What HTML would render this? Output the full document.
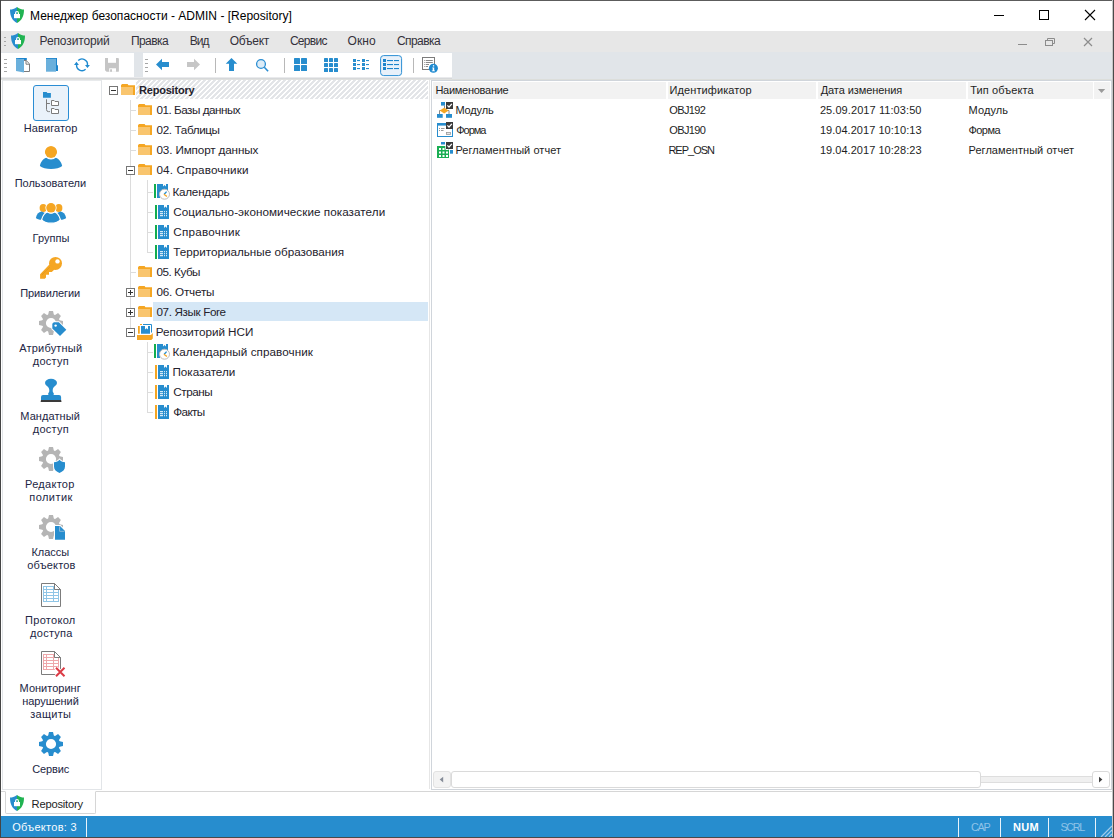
<!DOCTYPE html>
<html lang="ru">
<head>
<meta charset="utf-8">
<title>Менеджер безопасности - ADMIN - [Repository]</title>
<style>
html,body{margin:0;padding:0;}
body{width:1114px;height:838px;overflow:hidden;background:#fff;font-family:"Liberation Sans","DejaVu Sans",sans-serif;font-size:12px;color:#1e1e1e;}
#win{position:relative;width:1114px;height:838px;overflow:hidden;background:#fff;}
.a{position:absolute;}
.t{position:absolute;white-space:nowrap;line-height:16px;height:16px;}
#title{left:1px;top:1px;width:1112px;height:30px;background:#fff;}
#menu{left:1px;top:31px;width:1112px;height:21px;background:#e7e7e7;}
#tbrow{left:1px;top:52px;width:1112px;height:28px;background:#e1e5e9;}
#tbline{left:1px;top:77px;width:451px;height:3px;background:linear-gradient(#e9eaec 0,#e9eaec 33.3%,#d6d8da 33.3%,#d6d8da 66.6%,#dfe0de 66.6%,#dfe0de 100%);}
#tbline2{left:452px;top:79px;width:661px;height:1px;background:#dcdedb;}
#tb1{left:1px;top:53px;width:133px;height:24px;background:#fff;}
#tb2{left:143px;top:53px;width:309px;height:24px;background:#fff;}
#side{left:2px;top:80px;width:98px;height:708px;background:#fff;border:1px solid #e2e5e8;border-top-color:#e8eaec;box-sizing:content-box;}
#navbtn{left:33px;top:85px;width:34px;height:34px;border:1px solid #2a8dd4;border-radius:3px;background:#eaf2fa;}
#tree{left:103px;top:80px;width:325px;height:711px;background:#fff;}
#sel{left:153px;top:302px;width:275px;height:19px;background:#d5e7f6;}
#split{left:429px;top:80px;width:1px;height:709px;background:#e6e6e6;}
#list{left:431px;top:80px;width:681px;height:710px;background:#fff;border:1px solid #d0d5db;box-sizing:border-box;}
.hd{top:82px;height:17px;background:#f2f2f2;}
#sbtrack{left:452px;top:776px;width:641px;height:7px;background:#f0f0f0;border:1px solid #dedede;box-sizing:border-box;}
#sbthumb{left:451px;top:771px;width:530px;height:17px;background:#fff;border:1px solid #dadada;border-radius:3px;box-sizing:border-box;}
.sbb{top:771px;width:18px;height:17px;background:#fff;border:1px solid #dadada;border-radius:3px;box-sizing:border-box;}
#tabline{left:1px;top:791px;width:1112px;height:1px;background:#d6d6d6;}
#tab{left:5px;top:791px;width:89px;height:21px;background:#fff;border:1px solid #d6d6d6;border-top:1px solid #fff;border-radius:0 0 2px 2px;box-sizing:content-box;}
#status{left:1px;top:816px;width:1112px;height:21px;background:#278dce;}
.ss{top:818px;width:1px;height:19px;background:#e9f3fb;}
#bT{left:0;top:0;width:1114px;height:1px;background:#5c5c5c;}
#bL{left:0;top:0;width:1px;height:838px;background:#454545;}
#bR{left:1112px;top:0;width:2px;height:838px;background:linear-gradient(90deg,#c6c6c6 0,#c6c6c6 50%,#4a4a4a 50%,#4a4a4a 100%);}
#bB{left:0;top:837px;width:1114px;height:1px;background:#4a4a4a;}
</style>
</head>
<body>
<div id="win">
<div id="title" class="a"></div>
<div id="menu" class="a"></div>
<div id="tbrow" class="a"></div>
<div id="tbline" class="a"></div><div id="tbline2" class="a"></div>
<div id="tb1" class="a"></div>
<div id="tb2" class="a"></div>
<div id="tree" class="a"></div>
<div id="sel" class="a"></div>
<div id="split" class="a"></div>
<div id="list" class="a"></div>
<div class="a hd" style="left:433px;width:233px"></div>
<div class="a hd" style="left:668px;width:148px"></div>
<div class="a hd" style="left:818px;width:148px"></div>
<div class="a hd" style="left:968px;width:125px"></div>
<div class="a hd" style="left:1094px;width:16px"></div>
<div id="sbtrack" class="a"></div>
<div id="sbthumb" class="a"></div>
<div class="a sbb" style="left:433px;background:#f3f3f3;border-color:#e2e2e2"></div>
<div class="a sbb" style="left:1092px"></div>
<div id="side" class="a"></div>
<div id="navbtn" class="a"></div>
<div id="tabline" class="a"></div>
<div id="tab" class="a"></div>
<div id="status" class="a"></div>
<div class="a ss" style="left:86px"></div>
<div class="a ss" style="left:958px"></div>
<div class="a ss" style="left:1000px"></div>
<div class="a ss" style="left:1048px"></div>
<div class="a ss" style="left:1095px"></div>
<svg class="a" style="left:0;top:0" width="1114" height="838" viewBox="0 0 1114 838">
<defs><pattern id="hx" x="0" y="0" width="5" height="5" patternUnits="userSpaceOnUse"><g fill="#e3e5e8" shape-rendering="crispEdges"><rect x="3" y="0" width="1" height="1"/><rect x="4" y="0" width="1" height="1"/><rect x="0" y="0" width="1" height="1"/><rect x="2" y="1" width="1" height="1"/><rect x="3" y="1" width="1" height="1"/><rect x="4" y="1" width="1" height="1"/><rect x="1" y="2" width="1" height="1"/><rect x="2" y="2" width="1" height="1"/><rect x="3" y="2" width="1" height="1"/><rect x="0" y="3" width="1" height="1"/><rect x="1" y="3" width="1" height="1"/><rect x="2" y="3" width="1" height="1"/><rect x="4" y="4" width="1" height="1"/><rect x="0" y="4" width="1" height="1"/><rect x="1" y="4" width="1" height="1"/></g></pattern></defs>
<rect x="136" y="80" width="292" height="19" fill="url(#hx)" shape-rendering="crispEdges"/>
<path d="M17,7 C14.5,8.8 12,9.6 10,9.6 C10,16.5 12.2,20.5 17,23 Z" fill="#278dce"/><path d="M17,7 C19.5,8.8 22,9.6 24,9.6 C24,16.5 21.8,20.5 17,23 Z" fill="#21b352"/><rect x="14" y="14" width="6" height="4.2" fill="#fff"/><path d="M15.6,14.2 v-1.3 a1.4,1.4 0 0 1 2.8,0 v1.3" fill="none" stroke="#fff" stroke-width="1.2"/>
<path d="M18,33 C15.5,34.8 13,35.6 11,35.6 C11,42.5 13.2,46.5 18,49 Z" fill="#278dce"/><path d="M18,33 C20.5,34.8 23,35.6 25,35.6 C25,42.5 22.8,46.5 18,49 Z" fill="#21b352"/><rect x="15" y="40" width="6" height="4.2" fill="#fff"/><path d="M16.6,40.2 v-1.3 a1.4,1.4 0 0 1 2.8,0 v1.3" fill="none" stroke="#fff" stroke-width="1.2"/>
<path d="M17,795 C14.5,796.8 12,797.6 10,797.6 C10,804.5 12.2,808.5 17,811 Z" fill="#278dce"/><path d="M17,795 C19.5,796.8 22,797.6 24,797.6 C24,804.5 21.8,808.5 17,811 Z" fill="#21b352"/><rect x="14" y="802" width="6" height="4.2" fill="#fff"/><path d="M15.6,802.2 v-1.3 a1.4,1.4 0 0 1 2.8,0 v1.3" fill="none" stroke="#fff" stroke-width="1.2"/>
<g stroke="#000" stroke-width="1" fill="none"><path d="M994,15.5 h10"/><rect x="1039.5" y="10.5" width="9" height="9"/><path d="M1085,10 l10,10 M1095,10 l-10,10" stroke-width="1.1"/></g>
<g stroke="#8c8c8c" stroke-width="1" fill="none"><path d="M1018,44.5 h9"/><path d="M1047.5,40.5 v-2 h7 v5 h-2"/><rect x="1045.5" y="40.5" width="7" height="5" fill="#e7e7e7"/><path d="M1084,38 l8,8 M1092,38 l-8,8" stroke-width="1.2"/></g>
<g fill="#a6a6a6"><rect x="4" y="59" width="3" height="1"/><rect x="145" y="59" width="3" height="1"/><rect x="4" y="63" width="3" height="1"/><rect x="145" y="63" width="3" height="1"/><rect x="4" y="67" width="3" height="1"/><rect x="145" y="67" width="3" height="1"/><rect x="4" y="71" width="3" height="1"/><rect x="145" y="71" width="3" height="1"/><rect x="4" y="37" width="2" height="1"/><rect x="4" y="41" width="2" height="1"/><rect x="4" y="45" width="2" height="1"/></g>
<path d="M16,58 h10.8 v2.2 h-2.8 v-0.6 h-8 Z" fill="#1c84cc"/>
<path d="M23,60.5 H26.200 L29.5,63.800 V71.5 H23 Z" fill="#fff" stroke="#7c7c7c" stroke-width="1"/>
<path d="M26,60.800 V64.200 H29.3" fill="none" stroke="#7c7c7c" stroke-width="1"/>
<path d="M16,58.6 l8,1 v13 l-8,-1.7 Z" fill="#6ab0dc"/>
<path d="M46,58 h11 v7.2 h1 v5.7 h-2.2 v-12 h-9.8 Z" fill="#1c84cc"/>
<rect x="46" y="58.8" width="10" height="12.9" fill="#6ab0dc"/>
<g fill="none" stroke="#1f8ad0" stroke-width="1.4"><path d="M78.2,60.6 A5.4,5.4 0 0 1 87.4,65.2"/><path d="M85.6,69.3 A5.4,5.4 0 0 1 76.6,64.8"/></g>
<path d="M74,64.9 h4.9 l-2.45,-3.2 Z M85,65.1 h4.9 l-2.45,3 Z" fill="#1f8ad0"/>
<path d="M105,58 h13 q0.9,0 0.9,0.9 v12 q0,0.9 -0.9,0.9 h-11.4 l-1.6,-1.6 Z" fill="#c5c5c5"/>
<rect x="108" y="58" width="8" height="4.8" fill="#fff"/><rect x="109.2" y="68.3" width="6.8" height="3.5" fill="#fff"/><rect x="110.1" y="69.3" width="1.9" height="2.5" fill="#c5c5c5"/>
<path d="M156,64.5 l6,-5.7 v3.2 h7 v5 h-7 v3.2 Z" fill="#278dce"/>
<path d="M200,64.5 l-6,-5.7 v3.2 h-7 v5 h7 v3.2 Z" fill="#c6c6c6"/>
<rect x="215" y="58" width="1" height="15" fill="#b8b8b8"/><rect x="284" y="58" width="1" height="15" fill="#b8b8b8"/><rect x="413" y="58" width="1" height="15" fill="#b8b8b8"/>
<path d="M231.5,57.9 l5.8,5.9 h-3.3 v7.1 h-5 v-7.1 h-3.3 Z" fill="#278dce"/>
<circle cx="261" cy="64" r="4.4" fill="#ddecf7" stroke="#2a8dd2" stroke-width="1.3"/><path d="M264.3,67.3 l3.8,3.9" stroke="#2a8dd2" stroke-width="1.6"/>
<g fill="#278dce"><rect x="294" y="58" width="6" height="6" rx=".6"/><rect x="301" y="58" width="6" height="6" rx=".6"/><rect x="294" y="65" width="6" height="6" rx=".6"/><rect x="301" y="65" width="6" height="6" rx=".6"/><rect x="324" y="58" width="4" height="4" rx=".6"/><rect x="324" y="63" width="4" height="4" rx=".6"/><rect x="324" y="68" width="4" height="4" rx=".6"/><rect x="329" y="58" width="4" height="4" rx=".6"/><rect x="329" y="63" width="4" height="4" rx=".6"/><rect x="329" y="68" width="4" height="4" rx=".6"/><rect x="334" y="58" width="4" height="4" rx=".6"/><rect x="334" y="63" width="4" height="4" rx=".6"/><rect x="334" y="68" width="4" height="4" rx=".6"/><rect x="353" y="59" width="3" height="3"/><rect x="357" y="60" width="3" height="1.1"/><rect x="362" y="59" width="3" height="3"/><rect x="366" y="60" width="3" height="1.1"/><rect x="353" y="63" width="3" height="3"/><rect x="357" y="64" width="3" height="1.1"/><rect x="362" y="63" width="3" height="3"/><rect x="366" y="64" width="3" height="1.1"/><rect x="353" y="67" width="3" height="3"/><rect x="357" y="68" width="3" height="1.1"/><rect x="362" y="67" width="3" height="3"/><rect x="366" y="68" width="3" height="1.1"/></g>
<rect x="380.6" y="55.6" width="21" height="20" rx="3" fill="#e8f1fa" stroke="#2d8fd4" stroke-width="1"/>
<g fill="#1c84cc"><rect x="383" y="59" width="3" height="3"/><rect x="387" y="60" width="6" height="1.1"/><rect x="394" y="60" width="5" height="1.1"/><rect x="383" y="63" width="3" height="3"/><rect x="387" y="64" width="6" height="1.1"/><rect x="394" y="64" width="5" height="1.1"/><rect x="383" y="67" width="3" height="3"/><rect x="387" y="68" width="6" height="1.1"/><rect x="394" y="68" width="5" height="1.1"/></g>
<rect x="422.5" y="57.5" width="12" height="12" fill="#fff" stroke="#7c7c7c" stroke-width="1"/>
<g fill="#8a8a8a"><rect x="424.3" y="60" width="1" height="1"/><rect x="424.3" y="62" width="1" height="1"/><rect x="424.3" y="64" width="1" height="1"/><rect x="424.3" y="66" width="1" height="1"/><rect x="426" y="60" width="6.8" height="1"/><rect x="426" y="62" width="6.8" height="1"/><rect x="426" y="64" width="3" height="1"/><rect x="426" y="66" width="2" height="1"/></g>
<circle cx="433.4" cy="68.3" r="4.5" fill="#1f8ad0"/><rect x="432.9" y="65.2" width="1.3" height="1.3" fill="#fff"/><path d="M432.3,67.4 h1.9 v3 h0.8 v0.9 h-3.2 v-0.9 h0.9 v-2.1 h-0.4 Z" fill="#fff"/>
<path d="M43,92 h3.6 l0.8,1 h3.5 v4.8 h-7.9 Z" fill="#278dce"/>
<path d="M46.5,99.3 v10.3 q0,2 2,2 h1.4 M46.5,103.5 h3.4" fill="none" stroke="#7c7c7c" stroke-width="1"/>
<path d="M51.5,100.5 h2.6 l0.9,1 h3.5 v4 h-7 Z" fill="#fff" stroke="#7c7c7c" stroke-width="1"/>
<path d="M51.5,108.5 h2.6 l0.9,1 h3.5 v4 h-7 Z" fill="#fff" stroke="#7c7c7c" stroke-width="1"/>
<path d="M39.9,166 C41,161 44,158 47.5,157.6 Q51,160.2 54.5,157.6 C58,158 61,161 62.2,166 C58,170 44,170 39.9,166 Z" fill="#278dce"/>
<circle cx="51" cy="152" r="6.1" fill="#f5a623" stroke="#fff" stroke-width="0"/>
<circle cx="51" cy="152" r="6.9" fill="none" stroke="#fff" stroke-width="1.2"/>
<ellipse cx="43.2" cy="208" rx="3.6" ry="4.1" fill="#f5a623"/><ellipse cx="58.8" cy="208" rx="3.6" ry="4.1" fill="#f5a623"/>
<path d="M35.9,218 C36.5,214.5 38.5,212 41.5,211.6 L45,213 L41.5,219.8 C39,219.8 37,219 35.9,218 Z" fill="#278dce"/>
<path d="M66.1,218 C65.5,214.5 63.500,212 60.5,211.6 L57,213 L60.5,219.8 C63,219.8 65,219 66.100,218 Z" fill="#278dce"/>
<path d="M41.600,219.600 C42.800,215.400 44.900,212.600 47.700,212 Q51,214.200 54.300,212 C57.100,212.600 59.200,215.400 60.400,219.600 C57,224.400 45,224.400 41.600,219.600 Z" fill="#278dce" stroke="#fff" stroke-width="1.2"/>
<circle cx="51" cy="207.8" r="5.6" fill="#fff"/><circle cx="51" cy="207.8" r="4.8" fill="#f5a623"/>
<circle cx="55.5" cy="263.4" r="6.5" fill="#f5a623"/><path d="M49.4,264.6 L40.1,274.3 V278.8 H44.8 L46,277.6 V274.7 H49 V271.9 H51.8 L55,269 Z" fill="#f5a623"/><circle cx="57.5" cy="261.4" r="2.2" fill="#fff"/><path d="M42.2,274.6 L49.6,267.4" stroke="#c98a1e" stroke-width=".7" stroke-dasharray="1 .6" fill="none"/>
<g fill="#b5b5b5"><path d="M49.0,311 h4.0 L54.0,315.3 h-6.0 Z" transform="rotate(0 51 323)"/><path d="M49.0,311 h4.0 L54.0,315.3 h-6.0 Z" transform="rotate(45 51 323)"/><path d="M49.0,311 h4.0 L54.0,315.3 h-6.0 Z" transform="rotate(90 51 323)"/><path d="M49.0,311 h4.0 L54.0,315.3 h-6.0 Z" transform="rotate(135 51 323)"/><path d="M49.0,311 h4.0 L54.0,315.3 h-6.0 Z" transform="rotate(180 51 323)"/><path d="M49.0,311 h4.0 L54.0,315.3 h-6.0 Z" transform="rotate(225 51 323)"/><path d="M49.0,311 h4.0 L54.0,315.3 h-6.0 Z" transform="rotate(270 51 323)"/><path d="M49.0,311 h4.0 L54.0,315.3 h-6.0 Z" transform="rotate(315 51 323)"/></g><circle cx="51" cy="323" r="7.0" fill="none" stroke="#b5b5b5" stroke-width="3.8000000000000007"/>
<path d="M52.3,323.8 L53.8,322.2 L58.8,322.2 L66.3,329.8 L60,336 L52.3,328.6 Z" fill="#fff" stroke="#fff" stroke-width="2"/><path d="M52.3,323.8 L53.8,322.2 L58.8,322.2 L66.3,329.8 L60,336 L52.3,328.6 Z" fill="#278dce"/><circle cx="55.6" cy="325.600" r="1.2" fill="#fff"/>
<ellipse cx="51" cy="382.9" rx="6" ry="4.2" fill="#278dce"/><path d="M46.500,385 C47.5,386.800 49.3,387.500 49.3,390 C49.3,391.500 49.2,392.200 48.600,392.700 Q47.900,393.200 48.200,394.200 L48.500,395 H43 Q41,395 41,397 V400 H61.100 V397 Q61.100,395 59,395 H53.500 L53.800,394.200 Q54.100,393.200 53.400,392.700 C52.800,392.200 52.700,391.500 52.700,390 C52.700,387.500 54.5,386.800 55.5,385 Z" fill="#278dce"/><path d="M41,400 h20.100 l0.400,2 h-20.900 Z" fill="#3a3a3a"/>
<g fill="#b5b5b5"><path d="M49.0,447 h4.0 L54.0,451.3 h-6.0 Z" transform="rotate(0 51 459)"/><path d="M49.0,447 h4.0 L54.0,451.3 h-6.0 Z" transform="rotate(45 51 459)"/><path d="M49.0,447 h4.0 L54.0,451.3 h-6.0 Z" transform="rotate(90 51 459)"/><path d="M49.0,447 h4.0 L54.0,451.3 h-6.0 Z" transform="rotate(135 51 459)"/><path d="M49.0,447 h4.0 L54.0,451.3 h-6.0 Z" transform="rotate(180 51 459)"/><path d="M49.0,447 h4.0 L54.0,451.3 h-6.0 Z" transform="rotate(225 51 459)"/><path d="M49.0,447 h4.0 L54.0,451.3 h-6.0 Z" transform="rotate(270 51 459)"/><path d="M49.0,447 h4.0 L54.0,451.3 h-6.0 Z" transform="rotate(315 51 459)"/></g><circle cx="51" cy="459" r="7.0" fill="none" stroke="#b5b5b5" stroke-width="3.8000000000000007"/>
<path d="M54,462.3 C56.5,462.3 58.3,461.3 59.5,459.8 C60.700,461.3 62.5,462.3 65,462.3 V466.5 C65,469.8 62.800,471.600 59.5,472.900 C56.200,471.600 54,469.8 54,466.5 Z" fill="#fff" stroke="#fff" stroke-width="2"/><path d="M54,462.3 C56.5,462.3 58.3,461.3 59.5,459.8 C60.700,461.3 62.5,462.3 65,462.3 V466.5 C65,469.8 62.800,471.600 59.5,472.900 C56.200,471.600 54,469.8 54,466.5 Z" fill="#278dce"/>
<g fill="#b5b5b5"><path d="M49.0,515 h4.0 L54.0,519.3000000000001 h-6.0 Z" transform="rotate(0 51 527)"/><path d="M49.0,515 h4.0 L54.0,519.3000000000001 h-6.0 Z" transform="rotate(45 51 527)"/><path d="M49.0,515 h4.0 L54.0,519.3000000000001 h-6.0 Z" transform="rotate(90 51 527)"/><path d="M49.0,515 h4.0 L54.0,519.3000000000001 h-6.0 Z" transform="rotate(135 51 527)"/><path d="M49.0,515 h4.0 L54.0,519.3000000000001 h-6.0 Z" transform="rotate(180 51 527)"/><path d="M49.0,515 h4.0 L54.0,519.3000000000001 h-6.0 Z" transform="rotate(225 51 527)"/><path d="M49.0,515 h4.0 L54.0,519.3000000000001 h-6.0 Z" transform="rotate(270 51 527)"/><path d="M49.0,515 h4.0 L54.0,519.3000000000001 h-6.0 Z" transform="rotate(315 51 527)"/></g><circle cx="51" cy="527" r="7.0" fill="none" stroke="#b5b5b5" stroke-width="3.8000000000000007"/>
<path d="M55,526 h5 l5,5 v8.800 h-10 Z" fill="#fff" stroke="#fff" stroke-width="2"/><path d="M55,526 h5 l5,5 v8.800 h-10 Z" fill="#278dce"/><path d="M59.600,526.300 v5 h5" fill="none" stroke="#9fc3dd" stroke-width=".8"/>
<path d="M41.5,583.5 h13 l6,6 v17 h-19 Z" fill="#fff" stroke="#7c7c7c"/><path d="M54.5,583.5 v6 h6" fill="#fff" stroke="#7c7c7c"/><path d="M43,586.5 H54 M43,589.5 H58.5 M43,592.5 H58.5 M43,595.5 H58.5 M43,598.5 H58.5 M43,601.5 H58.5 M43.5,586 V602 M46.5,586 V602 M53.5,586 V602 M58.5,589.5 V602 " stroke="#8fc5e6" stroke-width="1" fill="none"/><path d="M54.5,583.5 v6 h6 Z" fill="#fff" stroke="#7c7c7c"/>
<path d="M41.5,651.5 h13 l6,6 v17 h-19 Z" fill="#fff" stroke="#7c7c7c"/><path d="M54.5,651.5 v6 h6" fill="#fff" stroke="#7c7c7c"/><path d="M43,654.5 H54 M43,657.5 H58.5 M43,660.5 H58.5 M43,663.5 H58.5 M43,666.5 H58.5 M43,669.5 H58.5 M43.5,654 V670 M46.5,654 V670 M53.5,654 V670 M58.5,657.5 V670 " stroke="#eea7aa" stroke-width="1" fill="none"/><path d="M54.5,651.5 v6 h6 Z" fill="#fff" stroke="#7c7c7c"/>
<path d="M56,667.800 l8.500,8.500 M64.5,667.800 l-8.500,8.500" stroke="#fff" stroke-width="4"/><path d="M56,667.800 l8.500,8.500 M64.5,667.800 l-8.500,8.500" stroke="#dc3c46" stroke-width="2"/>
<g fill="#278dce"><path d="M49.0,732 h4.0 L54.0,736.3000000000001 h-6.0 Z" transform="rotate(0 51 744)"/><path d="M49.0,732 h4.0 L54.0,736.3000000000001 h-6.0 Z" transform="rotate(45 51 744)"/><path d="M49.0,732 h4.0 L54.0,736.3000000000001 h-6.0 Z" transform="rotate(90 51 744)"/><path d="M49.0,732 h4.0 L54.0,736.3000000000001 h-6.0 Z" transform="rotate(135 51 744)"/><path d="M49.0,732 h4.0 L54.0,736.3000000000001 h-6.0 Z" transform="rotate(180 51 744)"/><path d="M49.0,732 h4.0 L54.0,736.3000000000001 h-6.0 Z" transform="rotate(225 51 744)"/><path d="M49.0,732 h4.0 L54.0,736.3000000000001 h-6.0 Z" transform="rotate(270 51 744)"/><path d="M49.0,732 h4.0 L54.0,736.3000000000001 h-6.0 Z" transform="rotate(315 51 744)"/></g><circle cx="51" cy="744" r="7.0" fill="none" stroke="#278dce" stroke-width="3.8000000000000007"/>
<g fill="#dcdcdc"><rect x="130" y="100" width="1" height="228"/><rect x="147" y="180" width="1" height="73"/><rect x="147" y="342" width="1" height="71"/>
<rect x="131" y="110" width="5" height="1"/>
<rect x="131" y="130" width="5" height="1"/>
<rect x="131" y="150" width="5" height="1"/>
<rect x="131" y="272" width="5" height="1"/>
<rect x="148" y="192" width="5" height="1"/>
<rect x="148" y="212" width="5" height="1"/>
<rect x="148" y="232" width="5" height="1"/>
<rect x="148" y="252" width="5" height="1"/>
<rect x="148" y="352" width="5" height="1"/>
<rect x="148" y="372" width="5" height="1"/>
<rect x="148" y="392" width="5" height="1"/>
<rect x="148" y="412" width="5" height="1"/>
</g>
<rect x="109.5" y="86.5" width="8" height="8" fill="#fff" stroke="#767676"/><rect x="111" y="90" width="5" height="1" fill="#333"/>
<rect x="126.5" y="166.5" width="8" height="8" fill="#fff" stroke="#767676"/><rect x="128" y="170" width="5" height="1" fill="#333"/>
<rect x="126.5" y="288.5" width="8" height="8" fill="#fff" stroke="#767676"/><rect x="128" y="292" width="5" height="1" fill="#333"/><rect x="130" y="290" width="1" height="5" fill="#333"/>
<rect x="126.5" y="308.5" width="8" height="8" fill="#fff" stroke="#767676"/><rect x="128" y="312" width="5" height="1" fill="#333"/><rect x="130" y="310" width="1" height="5" fill="#333"/>
<rect x="126.5" y="328.5" width="8" height="8" fill="#fff" stroke="#767676"/><rect x="128" y="332" width="5" height="1" fill="#333"/>
<path d="M122,84 h5.6 l0.9,1.3 h6.5 v9.7 h-2 v-7.9 h-12 v-1.8 Z" fill="#f5a623"/><rect x="121" y="87" width="12" height="8" fill="#f9c56e"/>
<path d="M139,104 h5.6 l0.9,1.3 h6.5 v9.7 h-2 v-7.9 h-12 v-1.8 Z" fill="#f5a623"/><rect x="138" y="107" width="12" height="8" fill="#f9c56e"/>
<path d="M139,124 h5.6 l0.9,1.3 h6.5 v9.7 h-2 v-7.9 h-12 v-1.8 Z" fill="#f5a623"/><rect x="138" y="127" width="12" height="8" fill="#f9c56e"/>
<path d="M139,144 h5.6 l0.9,1.3 h6.5 v9.7 h-2 v-7.9 h-12 v-1.8 Z" fill="#f5a623"/><rect x="138" y="147" width="12" height="8" fill="#f9c56e"/>
<path d="M139,164 h5.6 l0.9,1.3 h6.5 v9.7 h-2 v-7.9 h-12 v-1.8 Z" fill="#f5a623"/><rect x="138" y="167" width="12" height="8" fill="#f9c56e"/>
<path d="M139,266 h5.6 l0.9,1.3 h6.5 v9.7 h-2 v-7.9 h-12 v-1.8 Z" fill="#f5a623"/><rect x="138" y="269" width="12" height="8" fill="#f9c56e"/>
<path d="M139,286 h5.6 l0.9,1.3 h6.5 v9.7 h-2 v-7.9 h-12 v-1.8 Z" fill="#f5a623"/><rect x="138" y="289" width="12" height="8" fill="#f9c56e"/>
<path d="M139,306 h5.6 l0.9,1.3 h6.5 v9.7 h-2 v-7.9 h-12 v-1.8 Z" fill="#f5a623"/><rect x="138" y="309" width="12" height="8" fill="#f9c56e"/>
<rect x="154" y="184" width="2" height="14" fill="#12ad4f"/><path d="M157,184 h6 v2.6 l1.5,-1.5 l1.5,1.5 v-2.6 h2 v9 h-8 v5 h-3 Z" fill="#278dce"/><circle cx="164.5" cy="194.2" r="5" fill="#fff" stroke="#bdbdbd" stroke-width="1"/><path d="M164.2,194.2 l2.4,-2.6" stroke="#278dce" stroke-width="1.3" fill="none"/><path d="M163.9,194.2 l3,2.4" stroke="#f5a623" stroke-width="1.3" fill="none"/>
<rect x="155" y="205" width="2" height="14" fill="#12ad4f"/><path d="M158,205 h6 v3 l1.5,-1.5 l1.5,1.5 v-3 h2 v14 h-11 Z" fill="#278dce"/><rect x="160" y="211.2" width="3" height="1" fill="#fff"/><rect x="164" y="211.2" width="1" height="1" fill="#fff"/><rect x="166" y="211.2" width="1" height="1" fill="#fff"/><rect x="160" y="213.2" width="3" height="1" fill="#fff"/><rect x="164" y="213.2" width="1" height="1" fill="#fff"/><rect x="166" y="213.2" width="1" height="1" fill="#fff"/><rect x="160" y="215.2" width="3" height="1" fill="#fff"/><rect x="164" y="215.2" width="1" height="1" fill="#fff"/><rect x="166" y="215.2" width="1" height="1" fill="#fff"/>
<rect x="155" y="225" width="2" height="14" fill="#12ad4f"/><path d="M158,225 h6 v3 l1.5,-1.5 l1.5,1.5 v-3 h2 v14 h-11 Z" fill="#278dce"/><rect x="160" y="231.2" width="3" height="1" fill="#fff"/><rect x="164" y="231.2" width="1" height="1" fill="#fff"/><rect x="166" y="231.2" width="1" height="1" fill="#fff"/><rect x="160" y="233.2" width="3" height="1" fill="#fff"/><rect x="164" y="233.2" width="1" height="1" fill="#fff"/><rect x="166" y="233.2" width="1" height="1" fill="#fff"/><rect x="160" y="235.2" width="3" height="1" fill="#fff"/><rect x="164" y="235.2" width="1" height="1" fill="#fff"/><rect x="166" y="235.2" width="1" height="1" fill="#fff"/>
<rect x="155" y="245" width="2" height="14" fill="#12ad4f"/><path d="M158,245 h6 v3 l1.5,-1.5 l1.5,1.5 v-3 h2 v14 h-11 Z" fill="#278dce"/><rect x="160" y="251.2" width="3" height="1" fill="#fff"/><rect x="164" y="251.2" width="1" height="1" fill="#fff"/><rect x="166" y="251.2" width="1" height="1" fill="#fff"/><rect x="160" y="253.2" width="3" height="1" fill="#fff"/><rect x="164" y="253.2" width="1" height="1" fill="#fff"/><rect x="166" y="253.2" width="1" height="1" fill="#fff"/><rect x="160" y="255.2" width="3" height="1" fill="#fff"/><rect x="164" y="255.2" width="1" height="1" fill="#fff"/><rect x="166" y="255.2" width="1" height="1" fill="#fff"/>
<rect x="154" y="344" width="2" height="14" fill="#12ad4f"/><path d="M157,344 h6 v2.6 l1.5,-1.5 l1.5,1.5 v-2.6 h2 v9 h-8 v5 h-3 Z" fill="#278dce"/><circle cx="164.5" cy="354.2" r="5" fill="#fff" stroke="#bdbdbd" stroke-width="1"/><path d="M164.2,354.2 l2.4,-2.6" stroke="#278dce" stroke-width="1.3" fill="none"/><path d="M163.9,354.2 l3,2.4" stroke="#f5a623" stroke-width="1.3" fill="none"/>
<rect x="155" y="365" width="2" height="14" fill="#f5a623"/><path d="M158,365 h6 v3 l1.5,-1.5 l1.5,1.5 v-3 h2 v14 h-11 Z" fill="#278dce"/><rect x="160" y="371.2" width="3" height="1" fill="#fff"/><rect x="164" y="371.2" width="1" height="1" fill="#fff"/><rect x="166" y="371.2" width="1" height="1" fill="#fff"/><rect x="160" y="373.2" width="3" height="1" fill="#fff"/><rect x="164" y="373.2" width="1" height="1" fill="#fff"/><rect x="166" y="373.2" width="1" height="1" fill="#fff"/><rect x="160" y="375.2" width="3" height="1" fill="#fff"/><rect x="164" y="375.2" width="1" height="1" fill="#fff"/><rect x="166" y="375.2" width="1" height="1" fill="#fff"/>
<rect x="155" y="385" width="2" height="14" fill="#f5a623"/><path d="M158,385 h6 v3 l1.5,-1.5 l1.5,1.5 v-3 h2 v14 h-11 Z" fill="#278dce"/><rect x="160" y="391.2" width="3" height="1" fill="#fff"/><rect x="164" y="391.2" width="1" height="1" fill="#fff"/><rect x="166" y="391.2" width="1" height="1" fill="#fff"/><rect x="160" y="393.2" width="3" height="1" fill="#fff"/><rect x="164" y="393.2" width="1" height="1" fill="#fff"/><rect x="166" y="393.2" width="1" height="1" fill="#fff"/><rect x="160" y="395.2" width="3" height="1" fill="#fff"/><rect x="164" y="395.2" width="1" height="1" fill="#fff"/><rect x="166" y="395.2" width="1" height="1" fill="#fff"/>
<rect x="155" y="405" width="2" height="14" fill="#f5a623"/><path d="M158,405 h6 v3 l1.5,-1.5 l1.5,1.5 v-3 h2 v14 h-11 Z" fill="#278dce"/><rect x="160" y="411.2" width="3" height="1" fill="#fff"/><rect x="164" y="411.2" width="1" height="1" fill="#fff"/><rect x="166" y="411.2" width="1" height="1" fill="#fff"/><rect x="160" y="413.2" width="3" height="1" fill="#fff"/><rect x="164" y="413.2" width="1" height="1" fill="#fff"/><rect x="166" y="413.2" width="1" height="1" fill="#fff"/><rect x="160" y="415.2" width="3" height="1" fill="#fff"/><rect x="164" y="415.2" width="1" height="1" fill="#fff"/><rect x="166" y="415.2" width="1" height="1" fill="#fff"/>
<rect x="140" y="324" width="2" height="1" fill="#f5a623"/><rect x="138" y="326" width="1.800" height="7.700" fill="#f5a623"/>
<path d="M143,324.500 h8.500 v8" fill="none" stroke="#278dce" stroke-width="1"/>
<path d="M141,326 h4 v3.600 l1.500,-1.400 l1.500,1.400 v-3.600 h2 v7.700 h-9 Z" fill="#278dce"/>
<path d="M137,335 h14 l1.800,-2 v5.500 l-1.500,1.400 h-14.300 Z" fill="#f5a623"/>
<path d="M439.5,114 v-3.500 h9.500 v3.500 M444.5,105.5 v3" fill="none" stroke="#8a8a8a" stroke-width="1"/>
<rect x="441" y="102" width="4" height="3.600" fill="#278dce"/><rect x="437" y="114" width="5.700" height="3.800" fill="#278dce"/><rect x="446" y="114" width="6" height="3.800" fill="#278dce"/>
<path d="M439.700,110.600 l4.500,-2.800 l4.500,2.800 l-4.500,2.800 Z" fill="#f5a623"/>
<rect x="446" y="102" width="7" height="7" fill="#3a3a3a"/><path d="M447.4,105.4 l1.6,1.7 l2.8,-3.2" fill="none" stroke="#fff" stroke-width="1.3"/>
<rect x="437.500" y="123.500" width="15" height="13" fill="#fff" stroke="#278dce"/><rect x="437" y="123" width="9" height="2.600" fill="#278dce"/>
<g fill="#9a9a9a"><rect x="439" y="128" width="1" height="1"/><rect x="441" y="128" width="3.500" height="1"/><rect x="439" y="130" width="1" height="1"/><rect x="441" y="130" width="2.500" height="1"/></g><rect x="446.500" y="132.500" width="4" height="2" fill="#e8e8e8" stroke="#9a9a9a" stroke-width=".8"/>
<rect x="446" y="122" width="7" height="7" fill="#3a3a3a"/><path d="M447.4,125.4 l1.6,1.7 l2.8,-3.2" fill="none" stroke="#fff" stroke-width="1.3"/>
<rect x="437" y="146" width="12" height="12" fill="#19ae53"/>
<g fill="#fff"><rect x="439.0" y="148.0" width="2" height="2"/><rect x="439.0" y="151.5" width="2" height="2"/><rect x="439.0" y="155.0" width="2" height="2"/><rect x="442.5" y="148.0" width="2" height="2"/><rect x="442.5" y="151.5" width="2" height="2"/><rect x="442.5" y="155.0" width="2" height="2"/><rect x="446.0" y="148.0" width="2" height="2"/><rect x="446.0" y="151.5" width="2" height="2"/><rect x="446.0" y="155.0" width="2" height="2"/></g>
<rect x="441" y="142" width="4" height="2.500" fill="#278dce"/><rect x="450" y="150" width="3" height="3.700" fill="#278dce"/>
<rect x="445.3" y="141.400" width="8.400" height="8.200" fill="#fff"/>
<rect x="446" y="142" width="7" height="7" fill="#3a3a3a"/><path d="M447.4,145.4 l1.6,1.7 l2.8,-3.2" fill="none" stroke="#fff" stroke-width="1.3"/>
<path d="M1098,89 h7.200 l-3.600,4 Z" fill="#9a9a9a"/>
<path d="M443.2,776.800 v5.600 l-3.500,-2.800 Z" fill="#858c98"/><path d="M1099,776.800 v5.600 l3.400,-2.800 Z" fill="#404040"/>
<path d="M1112,826 l-11,11 M1112,830 l-7,7 M1112,834 l-3,3" stroke="#9fcaea" stroke-width="1.200" fill="none"/>
</svg>
<div class="t" style="left:30.0px;top:7.6px;font-size:12px;color:#000;letter-spacing:0.01px;">Менеджер безопасности - ADMIN - [Repository]</div>
<div class="t" style="left:39.6px;top:33.1px;font-size:12px;color:#34313a;letter-spacing:-0.13px;">Репозиторий</div>
<div class="t" style="left:130.9px;top:33.1px;font-size:12px;color:#34313a;letter-spacing:-0.57px;">Правка</div>
<div class="t" style="left:189.7px;top:33.1px;font-size:12px;color:#34313a;letter-spacing:-0.89px;">Вид</div>
<div class="t" style="left:229.7px;top:33.1px;font-size:12px;color:#34313a;letter-spacing:-0.26px;">Объект</div>
<div class="t" style="left:289.9px;top:33.1px;font-size:12px;color:#34313a;letter-spacing:-0.69px;">Сервис</div>
<div class="t" style="left:347.5px;top:33.1px;font-size:12px;color:#34313a;letter-spacing:0.11px;">Окно</div>
<div class="t" style="left:396.9px;top:33.1px;font-size:12px;color:#34313a;letter-spacing:-0.54px;">Справка</div>
<div class="t" style="left:23.7px;top:119.9px;font-size:11px;color:#222644;letter-spacing:0.11px;">Навигатор</div>
<div class="t" style="left:14.7px;top:174.9px;font-size:11px;color:#222644;letter-spacing:-0.03px;">Пользователи</div>
<div class="t" style="left:32.6px;top:229.9px;font-size:11px;color:#222644;letter-spacing:0.04px;">Группы</div>
<div class="t" style="left:20.3px;top:284.9px;font-size:11px;color:#222644;letter-spacing:-0.13px;">Привилегии</div>
<div class="t" style="left:19.3px;top:339.9px;font-size:11px;color:#222644;letter-spacing:0.18px;">Атрибутный</div>
<div class="t" style="left:32.8px;top:352.9px;font-size:11px;color:#222644;letter-spacing:0.24px;">доступ</div>
<div class="t" style="left:20.3px;top:407.9px;font-size:11px;color:#222644;letter-spacing:0.08px;">Мандатный</div>
<div class="t" style="left:32.8px;top:420.9px;font-size:11px;color:#222644;letter-spacing:0.24px;">доступ</div>
<div class="t" style="left:25.1px;top:475.9px;font-size:11px;color:#222644;letter-spacing:0.27px;">Редактор</div>
<div class="t" style="left:29.3px;top:488.9px;font-size:11px;color:#222644;letter-spacing:0.44px;">политик</div>
<div class="t" style="left:31.4px;top:543.9px;font-size:11px;color:#222644;letter-spacing:-0.03px;">Классы</div>
<div class="t" style="left:27.2px;top:556.9px;font-size:11px;color:#222644;letter-spacing:0.20px;">объектов</div>
<div class="t" style="left:25.1px;top:611.9px;font-size:11px;color:#222644;letter-spacing:0.28px;">Протокол</div>
<div class="t" style="left:30.1px;top:624.9px;font-size:11px;color:#222644;letter-spacing:0.25px;">доступа</div>
<div class="t" style="left:19.6px;top:679.9px;font-size:11px;color:#222644;letter-spacing:0.01px;">Мониторинг</div>
<div class="t" style="left:22.3px;top:692.9px;font-size:11px;color:#222644;letter-spacing:-0.06px;">нарушений</div>
<div class="t" style="left:30.3px;top:705.9px;font-size:11px;color:#222644;letter-spacing:0.26px;">защиты</div>
<div class="t" style="left:32.3px;top:760.9px;font-size:11px;color:#222644;letter-spacing:-0.13px;">Сервис</div>
<div class="t" style="left:139.0px;top:82.0px;font-size:11.0px;color:#24222c;letter-spacing:-0.20px;font-weight:bold;">Repository</div>
<div class="t" style="left:156.5px;top:101.7px;font-size:11.7px;color:#24222c;letter-spacing:-0.49px;">01. Базы данных</div>
<div class="t" style="left:156.5px;top:121.7px;font-size:11.7px;color:#24222c;letter-spacing:-0.37px;">02. Таблицы</div>
<div class="t" style="left:156.5px;top:141.7px;font-size:11.7px;color:#24222c;letter-spacing:-0.14px;">03. Импорт данных</div>
<div class="t" style="left:156.5px;top:161.7px;font-size:11.7px;color:#24222c;letter-spacing:0.12px;">04. Справочники</div>
<div class="t" style="left:172.4px;top:183.7px;font-size:11.7px;color:#24222c;letter-spacing:-0.22px;">Календарь</div>
<div class="t" style="left:173.2px;top:203.7px;font-size:11.7px;color:#24222c;letter-spacing:0.05px;">Социально-экономические показатели</div>
<div class="t" style="left:173.2px;top:223.7px;font-size:11.7px;color:#24222c;letter-spacing:0.26px;">Справочник</div>
<div class="t" style="left:173.2px;top:243.7px;font-size:11.7px;color:#24222c;letter-spacing:0.00px;">Территориальные образования</div>
<div class="t" style="left:156.5px;top:263.7px;font-size:11.7px;color:#24222c;letter-spacing:-0.48px;">05. Кубы</div>
<div class="t" style="left:156.5px;top:283.7px;font-size:11.7px;color:#24222c;letter-spacing:-0.22px;">06. Отчеты</div>
<div class="t" style="left:156.5px;top:303.7px;font-size:11.7px;color:#24222c;letter-spacing:-0.38px;">07. Язык Fore</div>
<div class="t" style="left:155.7px;top:323.7px;font-size:11.7px;color:#24222c;letter-spacing:-0.04px;">Репозиторий НСИ</div>
<div class="t" style="left:172.4px;top:343.7px;font-size:11.7px;color:#24222c;letter-spacing:0.06px;">Календарный справочник</div>
<div class="t" style="left:172.4px;top:363.7px;font-size:11.7px;color:#24222c;letter-spacing:0.00px;">Показатели</div>
<div class="t" style="left:173.2px;top:383.7px;font-size:11.7px;color:#24222c;letter-spacing:-0.42px;">Страны</div>
<div class="t" style="left:173.2px;top:403.7px;font-size:11.7px;color:#24222c;letter-spacing:-0.58px;">Факты</div>
<div class="t" style="left:435.4px;top:81.9px;font-size:11px;color:#1e1e24;letter-spacing:-0.27px;">Наименование</div>
<div class="t" style="left:669.6px;top:81.9px;font-size:11px;color:#1e1e24;letter-spacing:0.09px;">Идентификатор</div>
<div class="t" style="left:820.7px;top:81.9px;font-size:11px;color:#1e1e24;letter-spacing:-0.09px;">Дата изменения</div>
<div class="t" style="left:970.2px;top:81.9px;font-size:11px;color:#1e1e24;letter-spacing:0.10px;">Тип объекта</div>
<div class="t" style="left:455.4px;top:102.0px;font-size:11px;color:#1e1e24;letter-spacing:-0.12px;">Модуль</div>
<div class="t" style="left:669.2px;top:102.0px;font-size:11px;color:#1e1e24;letter-spacing:-0.60px;">OBJ192</div>
<div class="t" style="left:819.9px;top:102.0px;font-size:11px;color:#1e1e24;letter-spacing:0.08px;">25.09.2017 11:03:50</div>
<div class="t" style="left:968.5px;top:102.0px;font-size:11px;color:#1e1e24;letter-spacing:0.11px;">Модуль</div>
<div class="t" style="left:456.2px;top:121.8px;font-size:11px;color:#1e1e24;letter-spacing:-1.00px;">Форма</div>
<div class="t" style="left:669.2px;top:121.8px;font-size:11px;color:#1e1e24;letter-spacing:-0.60px;">OBJ190</div>
<div class="t" style="left:819.9px;top:121.8px;font-size:11px;color:#1e1e24;letter-spacing:0.04px;">19.04.2017 10:10:13</div>
<div class="t" style="left:968.5px;top:121.8px;font-size:11px;color:#1e1e24;letter-spacing:-0.56px;">Форма</div>
<div class="t" style="left:455.4px;top:141.7px;font-size:11px;color:#1e1e24;letter-spacing:0.06px;">Регламентный отчет</div>
<div class="t" style="left:668.4px;top:141.7px;font-size:11px;color:#1e1e24;letter-spacing:-0.99px;">REP_OSN</div>
<div class="t" style="left:819.9px;top:141.7px;font-size:11px;color:#1e1e24;letter-spacing:0.04px;">19.04.2017 10:28:23</div>
<div class="t" style="left:968.5px;top:141.7px;font-size:11px;color:#1e1e24;letter-spacing:0.05px;">Регламентный отчет</div>
<div class="t" style="left:31.6px;top:796.0px;font-size:11.2px;color:#1e1e24;letter-spacing:-0.23px;">Repository</div>
<div class="t" style="left:12.3px;top:819.2px;font-size:11.0px;color:#f8fbfe;letter-spacing:0.27px;">Объектов: 3</div>
<div class="t" style="left:971.0px;top:819.3px;font-size:10.8px;color:#8fc3e8;letter-spacing:-1.23px;">CAP</div>
<div class="t" style="left:1013.0px;top:819.2px;font-size:11.0px;color:#fff;letter-spacing:0.31px;font-weight:bold;">NUM</div>
<div class="t" style="left:1060.5px;top:819.3px;font-size:10.8px;color:#8fc3e8;letter-spacing:-1.34px;">SCRL</div>
<div id="bT" class="a"></div><div id="bL" class="a"></div><div id="bR" class="a"></div><div id="bB" class="a"></div>
</div>
</body>
</html>
